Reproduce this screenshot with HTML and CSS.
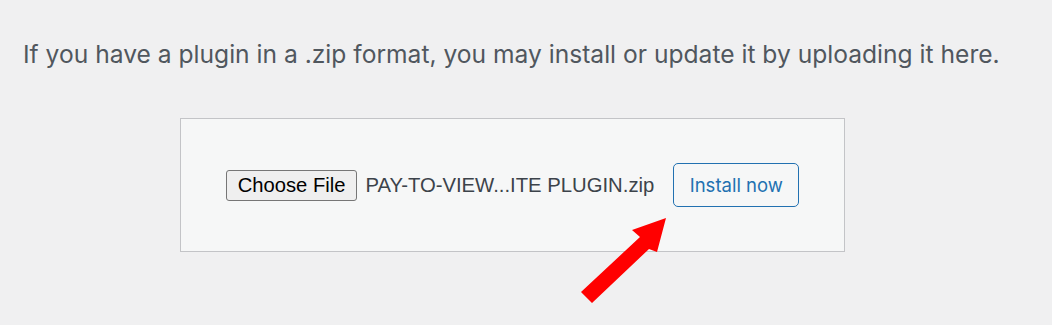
FILE: index.html
```html
<!DOCTYPE html>
<html>
<head>
    <title>Upload Plugin</title>
    <link rel="stylesheet" href="styles.css">
</head>
<body>
    <div class="wrap">
        <p class="install-help">If you have a plugin in a .zip format, you may install or update it by uploading it here.</p>
        <form class="upload-form" method="post" enctype="multipart/form-data">
            <label class="file-btn" for="pluginzip">Choose File</label>
            <span class="file-name">PAY-TO-VIEW...ITE PLUGIN.zip</span>
            <input type="file" id="pluginzip" name="pluginzip" class="file-hidden">
            <button class="btn" type="submit">Install now</button>
        </form>
        <!-- red pointer arrow -->
        <svg class="pointer" width="100" height="100" viewBox="0 0 100 100">
            <polygon points="91,6 57,18 65,25 6,80 17,91 74,37 82,40" fill="#ff0000"/>
        </svg>
    </div>
</body>
</html>
```

FILE: styles.css
```css
body {
    margin: 0;
    background: #f0f0f1;
}
.wrap {
    position: relative;
    height: 325px;
    padding-top: 36px;
    box-sizing: border-box;
}
.install-help {
    margin: 0 0 46px 23px;
    font-family: Inter, "Noto Sans", sans-serif;
    font-size: 24.6px;
    line-height: 36px;
    color: #50575e;
}
.upload-form {
    margin-left: 180px;
    width: 665px;
    height: 134px;
    box-sizing: border-box;
    border: 1px solid #c3c4c7;
    background: #f6f7f7;
    display: flex;
    align-items: center;
    justify-content: center;
}
.file-btn {
    font-family: "Liberation Sans", Arial, sans-serif;
    font-size: 20.2px;
    color: #000;
    background: #efefef;
    border: 1px solid #767676;
    border-radius: 3px;
    height: 31px;
    box-sizing: border-box;
    padding: 0 11px;
    display: flex;
    align-items: center;
}
.file-name {
    font-family: "Liberation Sans", Arial, sans-serif;
    font-size: 20.3px;
    color: #3c434a;
    margin-left: 8px;
    margin-right: 19px;
}
.file-hidden {
    display: none;
}
.btn {
    font-family: Inter, "Noto Sans", sans-serif;
    font-size: 18.5px;
    color: #2271b1;
    background: #f6f7f7;
    border: 1.5px solid #2271b1;
    border-radius: 5px;
    width: 126px;
    height: 44px;
    padding: 0;
}
.pointer {
    position: absolute;
    left: 575px;
    top: 212px;
}
```
